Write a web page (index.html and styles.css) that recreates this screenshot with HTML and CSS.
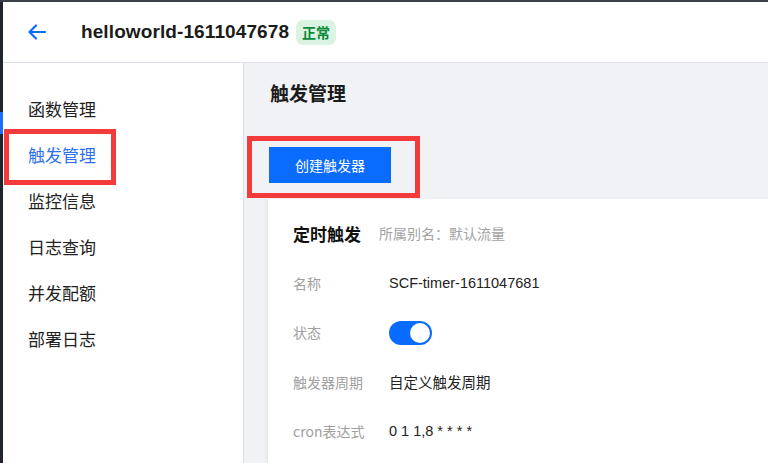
FILE: index.html
```html
<!DOCTYPE html>
<html lang="zh-CN">
<head>
<meta charset="utf-8">
<title>触发管理</title>
<link rel="stylesheet" href="styles.css">
</head>
<body>
<div class="app">
  <div class="edge"><div class="edge-active"></div></div>
  <div class="frame">
    <header class="topbar">
      <svg class="back" width="18" height="16" viewBox="0 0 18 16" aria-hidden="true">
        <path d="M17 8H2M8 1.5L1.5 8L8 14.5" fill="none" stroke="#0a6cff" stroke-width="2.2" stroke-linecap="round" stroke-linejoin="round"/>
      </svg>
      <h1 class="fn-name">helloworld-1611047678</h1>
      <span class="badge">正常</span>
    </header>
    <div class="body">
      <nav class="sidebar">
        <div class="nav-item">函数管理</div>
        <div class="nav-item active">触发管理<span class="mark mark-nav"></span></div>
        <div class="nav-item">监控信息</div>
        <div class="nav-item">日志查询</div>
        <div class="nav-item">并发配额</div>
        <div class="nav-item">部署日志</div>
      </nav>
      <main class="content">
        <h2 class="page-title">触发管理</h2>
        <div class="toolbar">
          <button class="btn-primary">创建触发器<span class="mark mark-btn"></span></button>
        </div>
        <section class="card">
          <div class="card-head">
            <span class="card-title">定时触发</span>
            <span class="card-sub">所属别名：默认流量</span>
          </div>
          <div class="row"><span class="label">名称</span><span class="value">SCF-timer-1611047681</span></div>
          <div class="row"><span class="label">状态</span><span class="toggle"><span class="knob"></span></span></div>
          <div class="row"><span class="label">触发器周期</span><span class="value">自定义触发周期</span></div>
          <div class="row"><span class="label">cron表达式</span><span class="value">0 1 1,8 * * * *</span></div>
        </section>
      </main>
    </div>
  </div>
</div>
</body>
</html>
```
FILE: styles.css
```css
* { box-sizing: border-box; }
html, body { margin: 0; padding: 0; height: 100%; overflow: hidden; }
body {
  font-family: "Noto Sans CJK SC", "Liberation Sans", sans-serif;
  color: #222;
  background: #fff;
}
.app {
  display: flex;
  height: 463px;
  border-top: 2px solid #3b3f48;
}
.edge {
  width: 3px;
  flex: none;
  background: #20252d;
}
.edge-active {
  margin-top: 110px;
  height: 22px;
  background: #1f6fff;
}
.frame {
  flex: 1;
  display: flex;
  flex-direction: column;
  min-width: 0;
}
.topbar {
  height: 61px;
  flex: none;
  display: flex;
  align-items: center;
  background: #fff;
  border-bottom: 1px solid #dde0e6;
  padding-left: 25px;
}
.fn-name {
  margin: 0 0 0 35px;
  font-family: "Liberation Sans", Arial, sans-serif;
  font-size: 19px;
  font-weight: bold;
  color: #1b1b1b;
  letter-spacing: 0.1px;
}
.badge {
  margin-left: 7px;
  padding: 0 6px;
  height: 25px;
  line-height: 25px;
  border-radius: 7px;
  background: #daf3e2;
  color: #0b8a3c;
  font-size: 14px;
  font-weight: bold;
}
.body {
  flex: 1;
  display: flex;
  min-height: 0;
}
.sidebar {
  width: 241px;
  flex: none;
  background: #fff;
  border-right: 1px solid #dde0e6;
  padding-top: 23px;
}
.nav-item {
  position: relative;
  height: 46px;
  line-height: 46px;
  padding-left: 25px;
  font-size: 17px;
  color: #222;
}
.nav-item.active { color: #2f72f0; }
.mark {
  position: absolute;
  border: 5px solid #f43b3b;
  pointer-events: none;
}
.mark-nav {
  left: 1px;
  top: -3px;
  width: 112px;
  height: 56px;
}
.content {
  flex: 1;
  display: flex;
  flex-direction: column;
  background: #f1f2f6;
  padding: 16px 0 0 24px;
  min-width: 0;
  overflow: hidden;
}
.page-title {
  margin: 0 0 0 2px;
  font-size: 19px;
  line-height: 28px;
  font-weight: bold;
  color: #1b1b1b;
}
.toolbar {
  margin-top: 40px;
  display: flex;
}
.btn-primary {
  position: relative;
  width: 122px;
  height: 36px;
  margin-left: 1px;
  border: none;
  background: #0a6cff;
  color: #fff;
  font-family: "Noto Sans CJK SC", sans-serif;
  font-size: 14px;
  padding: 0;
}
.mark-btn {
  left: -22px;
  top: -11px;
  width: 173px;
  height: 62px;
}
.card {
  flex: 1;
  margin-top: 16px;
  background: #fff;
  padding: 20px 0 0 25px;
  box-shadow: -2px 0 4px rgba(0, 0, 0, 0.05);
}
.card-head {
  display: flex;
  align-items: center;
  height: 28px;
}
.card-title {
  font-size: 17px;
  font-weight: bold;
  color: #111;
}
.card-sub {
  margin-left: 18px;
  font-size: 14px;
  color: #a2a2a2;
}
.card-head + .row { margin-top: 11px; }
.row {
  display: flex;
  align-items: center;
  height: 49.5px;
  font-size: 14px;
}
.label {
  width: 96px;
  flex: none;
  color: #a0a0a0;
}
.value {
  color: #222;
  font-family: "Liberation Sans", "Noto Sans CJK SC", sans-serif;
  font-size: 14.5px;
}
.toggle {
  display: flex;
  justify-content: flex-end;
  align-items: center;
  width: 43px;
  height: 24px;
  border-radius: 12px;
  background: #0a6cff;
  padding: 2px;
  margin-top: 1px;
}
.knob {
  width: 20px;
  height: 20px;
  border-radius: 50%;
  background: #fff;
}
```
